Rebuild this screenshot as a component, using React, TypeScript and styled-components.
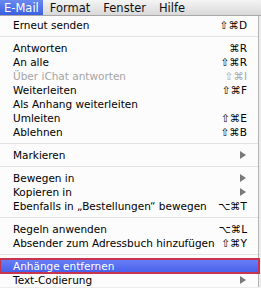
import React from "react";
import styled, { createGlobalStyle } from "styled-components";

const GlobalStyle = createGlobalStyle`
  html, body {
    margin: 0;
    padding: 0;
    background: #ececec;
    overflow: hidden;
  }
  body {
    font-family: "Lucida Grande", "DejaVu Sans", "Liberation Sans", sans-serif;
    -webkit-font-smoothing: antialiased;
  }
`;

type Item =
  | { kind: "sep" }
  | {
      kind: "item";
      label: string;
      shortcut?: string;
      submenu?: boolean;
      disabled?: boolean;
      active?: boolean;
    };

const items: Item[] = [
  { kind: "item", label: "Erneut senden", shortcut: "⇧⌘D" },
  { kind: "sep" },
  { kind: "item", label: "Antworten", shortcut: "⌘R" },
  { kind: "item", label: "An alle", shortcut: "⇧⌘R" },
  { kind: "item", label: "Über iChat antworten", shortcut: "⇧⌘I", disabled: true },
  { kind: "item", label: "Weiterleiten", shortcut: "⇧⌘F" },
  { kind: "item", label: "Als Anhang weiterleiten" },
  { kind: "item", label: "Umleiten", shortcut: "⇧⌘E" },
  { kind: "item", label: "Ablehnen", shortcut: "⇧⌘B" },
  { kind: "sep" },
  { kind: "item", label: "Markieren", submenu: true },
  { kind: "sep" },
  { kind: "item", label: "Bewegen in", submenu: true },
  { kind: "item", label: "Kopieren in", submenu: true },
  { kind: "item", label: "Ebenfalls in „Bestellungen“ bewegen", shortcut: "⌥⌘T" },
  { kind: "sep" },
  { kind: "item", label: "Regeln anwenden", shortcut: "⌥⌘L" },
  { kind: "item", label: "Absender zum Adressbuch hinzufügen", shortcut: "⇧⌘Y" },
  { kind: "sep" },
  { kind: "item", label: "Anhänge entfernen", active: true },
  { kind: "item", label: "Text-Codierung", submenu: true },
];

const MenuBar = styled.div`
  display: flex;
  height: 15px;
  background: linear-gradient(to bottom, #f4f4f4, #d9d9d9);
  border-bottom: 1px solid #a8a8a8;
  font-size: 11.5px;
  color: #111;
`;

const MenuTitle = styled.div<{ $open?: boolean }>`
  display: flex;
  align-items: center;
  padding: ${(p) => (p.$open ? "0 4px" : "0 6px 0 7px")};
  color: ${(p) => (p.$open ? "#fff" : "#111")};
  background: ${(p) =>
    p.$open ? "linear-gradient(to bottom, #6a8af0, #3b5fe0)" : "transparent"};
`;

const Menu = styled.div`
  width: 258px;
  padding-top: 2px;
  background: #fcfcfc;
  border-right: 1px solid #b4b4b4;
  font-size: 10.5px;
`;

const Row = styled.div<{ $disabled?: boolean; $active?: boolean }>`
  position: relative;
  display: grid;
  grid-template-columns: 1fr auto;
  align-items: center;
  height: 14px;
  padding: 0 11px 0 13px;
  color: ${(p) => (p.$active ? "#fff" : p.$disabled ? "#a4a4a4" : "#000")};
  white-space: nowrap;
  ${(p) =>
    p.$active &&
    `
    margin-right: -1px;
    padding-right: 12px;
    outline: 2px solid #c8344e;
    outline-offset: -1px;
    background: linear-gradient(to bottom, #6b7ff5, #4560ec);
  `}
`;

const Shortcut = styled.span`
  text-align: right;
`;

const Arrow = styled.span`
  display: block;
  width: 0;
  height: 0;
  margin-right: 1px;
  border-top: 4px solid transparent;
  border-bottom: 4px solid transparent;
  border-left: 6px solid #7a7a7a;
`;

const Separator = styled.div`
  height: 9px;
  display: flex;
  align-items: center;
  &::after {
    content: "";
    flex: 1;
    height: 1px;
    background: #e2e2e2;
  }
`;

export default function App() {
  return (
    <>
      <GlobalStyle />
      <MenuBar>
        <MenuTitle $open>E-Mail</MenuTitle>
        <MenuTitle>Format</MenuTitle>
        <MenuTitle>Fenster</MenuTitle>
        <MenuTitle>Hilfe</MenuTitle>
      </MenuBar>
      <Menu>
        {items.map((it, i) =>
          it.kind === "sep" ? (
            <Separator key={i} />
          ) : (
            <Row key={i} $disabled={it.disabled} $active={it.active}>
              <span>{it.label}</span>
              {it.submenu ? <Arrow /> : <Shortcut>{it.shortcut ?? ""}</Shortcut>}
            </Row>
          )
        )}
      </Menu>
    </>
  );
}
